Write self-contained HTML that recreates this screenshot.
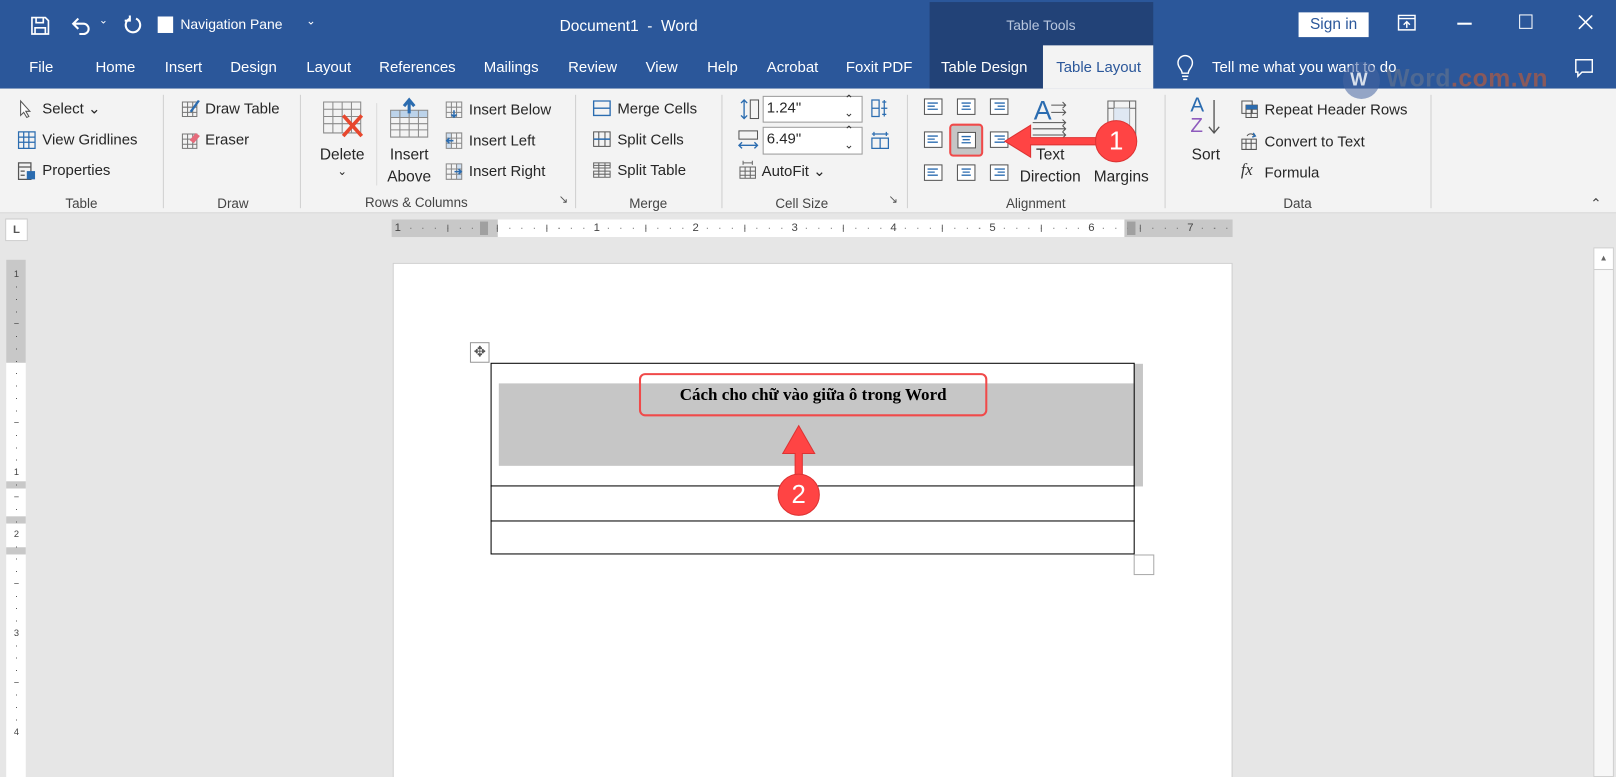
<!DOCTYPE html>
<html><head><meta charset="utf-8"><style>
*{margin:0;padding:0;box-sizing:border-box}
html,body{width:1616px;height:777px;overflow:hidden;background:#e6e6e6}
#w{position:absolute;left:0;top:0;width:1568px;height:754px;transform:scale(1.03061);transform-origin:0 0;font-family:"Liberation Sans",sans-serif;color:#262626;background:#e6e6e6;overflow:hidden}
.a{position:absolute;white-space:nowrap}
.tb{color:#fff;font-size:14.5px}
.r{font-size:14.5px;color:#262626}
.g{font-size:13px;color:#444;transform:translateX(-50%)}
.c{transform:translateX(-50%)}
.sep{position:absolute;top:92px;width:1px;height:110px;background:#d0d0d0}
svg{position:absolute;overflow:visible}
.rn{position:absolute;top:213px;height:17px;line-height:17px;font-size:11px;color:#444;transform:translateX(-50%);padding:0 1px}
</style></head><body><div id="w">
<!-- title bar -->
<div class="a" style="left:0;top:0;width:1568px;height:86px;background:#2b579a"></div>
<div class="a" style="top:2px;left:902px;width:217px;height:84px;background:#224277"></div>
<div class="a" style="left:1012px;top:44px;width:107px;height:42px;background:#f3f3f3"></div>
<div class="a" style="left:0;top:86px;width:1568px;height:121px;background:#f3f3f3;border-bottom:1px solid #d6d6d6"></div>
<!-- QAT -->
<svg style="left:30px;top:16px" width="18" height="18" viewBox="0 0 18 18"><path d="M1 1h13l3 3v13H1z M5 1v5h7V1 M4 17v-6h10v6" fill="none" stroke="#fff" stroke-width="1.6"/></svg>
<svg style="left:68px;top:15px" width="22" height="20" viewBox="0 0 22 20"><path d="M4 8h9a5 5 0 0 1 0 10H9 M8 3L3 8l5 5" fill="none" stroke="#fff" stroke-width="2"/></svg>
<div class="a tb" style="left:96px;top:15px;font-size:10px">&#8964;</div>
<svg style="left:120px;top:14px" width="18" height="20" viewBox="0 0 18 20"><path d="M12 4a7 7 0 1 1-6 0 M6 1v5H1" fill="none" stroke="#fff" stroke-width="2"/></svg>
<div class="a" style="left:153px;top:16px;width:15px;height:16px;background:#fff"></div>
<div class="a tb" style="left:175px;top:16px;font-size:13.5px">Navigation Pane</div>
<div class="a tb" style="left:297px;top:14px;font-size:11px">&#8964;</div>
<div class="a tb c" style="left:610px;top:17px;font-size:15px">Document1&nbsp; - &nbsp;Word</div>
<div class="a c" style="left:1010px;top:17px;font-size:13.5px;color:#b8c6de">Table Tools</div>
<div class="a" style="left:1260px;top:12px;width:68px;height:24px;background:#fff;color:#2b579a;font-size:15px;text-align:center;line-height:24px">Sign in</div>
<svg style="left:1356px;top:14px" width="18" height="16" viewBox="0 0 18 16"><path d="M1 1h16v14H1z M1 4h16 M9 13V7 M6 10l3-3 3 3" fill="none" stroke="#fff" stroke-width="1.4"/></svg>
<div class="a" style="left:1414px;top:22px;width:14px;height:1.5px;background:#fff"></div>
<div class="a" style="left:1474px;top:14px;width:13px;height:14px;border:1.5px solid #fff"></div>
<svg style="left:1531px;top:14px" width="15" height="15" viewBox="0 0 15 15"><path d="M1 1l13 13M14 1L1 14" stroke="#fff" stroke-width="1.5"/></svg>
<!-- tabs -->
<div class="a tb c" style="left:40px;top:58px">File</div>
<div class="a tb c" style="left:112px;top:58px">Home</div>
<div class="a tb c" style="left:178px;top:58px">Insert</div>
<div class="a tb c" style="left:246px;top:58px">Design</div>
<div class="a tb c" style="left:319px;top:58px">Layout</div>
<div class="a tb c" style="left:405px;top:58px">References</div>
<div class="a tb c" style="left:496px;top:58px">Mailings</div>
<div class="a tb c" style="left:575px;top:58px">Review</div>
<div class="a tb c" style="left:642px;top:58px">View</div>
<div class="a tb c" style="left:701px;top:58px">Help</div>
<div class="a tb c" style="left:769px;top:58px">Acrobat</div>
<div class="a tb c" style="left:853px;top:58px">Foxit PDF</div>
<div class="a tb c" style="left:955px;top:58px">Table Design</div>
<div class="a tb c" style="left:1066px;top:58px;color:#2b579a">Table Layout</div>
<svg style="left:1142px;top:54px" width="16" height="24" viewBox="0 0 16 24"><path d="M5 17c0-4-4-5-4-10a7 7 0 0 1 14 0c0 5-4 6-4 10z M5 20h6 M6 23h4" fill="none" stroke="#fff" stroke-width="1.4"/></svg>
<div class="a tb" style="left:1176px;top:58px">Tell me what you want to do</div>
<svg style="left:1528px;top:57px" width="18" height="18" viewBox="0 0 18 18"><path d="M1 1h16v12H7l-4 4v-4H1z" fill="none" stroke="#fff" stroke-width="1.4"/></svg>
<!-- watermark -->
<div class="a" style="left:1303px;top:60px;width:36px;height:36px;border-radius:50%;background:rgba(70,100,160,.55)"></div>
<div class="a" style="left:1310px;top:67px;font:bold 18px 'Liberation Sans',sans-serif;color:rgba(255,255,255,.8)">W</div>
<div class="a" style="left:1345px;top:63px;font:bold 24px 'Liberation Sans',sans-serif;color:rgba(110,120,140,.55);letter-spacing:0.5px">Word<span style="color:rgba(200,90,50,.6)">.com.vn</span></div>
<!-- separators -->
<div class="sep" style="left:158px"></div><div class="sep" style="left:291px"></div><div class="sep" style="left:558px"></div><div class="sep" style="left:700px"></div><div class="sep" style="left:880px"></div><div class="sep" style="left:1130px"></div><div class="sep" style="left:1388px"></div>
<!-- Table group -->
<svg style="left:18px;top:97px" width="14" height="18" viewBox="0 0 14 18"><path d="M2 1v14l3-3 3 5 2-1-3-5h4z" fill="#fff" stroke="#555"/></svg>
<div class="a r" style="left:41px;top:98px">Select &#8964;</div>
<svg style="left:17px;top:127px" width="18" height="18" viewBox="0 0 18 18"><path d="M1 1h16v16H1z M1 6h16 M1 11h16 M6 1v16 M11 1v16" fill="none" stroke="#2b6cb0" stroke-width="1.2"/></svg>
<div class="a r" style="left:41px;top:128px">View Gridlines</div>
<svg style="left:17px;top:157px" width="18" height="18" viewBox="0 0 18 18"><path d="M1 1h12v16H1z M1 5h12 M3 9h4 M3 13h4" fill="none" stroke="#555" stroke-width="1.2"/><rect x="9" y="9" width="8" height="8" fill="#2b6cb0"/></svg>
<div class="a r" style="left:41px;top:158px">Properties</div>
<div class="a g" style="left:79px;top:190px">Table</div>
<!-- Draw -->
<svg style="left:176px;top:96px" width="18" height="18" viewBox="0 0 18 18"><path d="M1 3h14v14H1z M1 8h14 M1 13h14 M6 3v14 M11 3v14" fill="none" stroke="#777"/><path d="M8 12l8-11 2 1-8 11z" fill="#2b6cb0"/></svg>
<div class="a r" style="left:199px;top:98px">Draw Table</div>
<svg style="left:176px;top:127px" width="18" height="18" viewBox="0 0 18 18"><path d="M1 3h14v14H1z M1 8h14 M1 13h14 M6 3v14 M11 3v14" fill="none" stroke="#777"/><path d="M8 9l6-7 4 3-6 7z" fill="#e56b7b"/></svg>
<div class="a r" style="left:199px;top:128px">Eraser</div>
<div class="a g" style="left:226px;top:190px">Draw</div>
<!-- Rows & Columns -->
<svg style="left:313px;top:98px" width="40" height="38" viewBox="0 0 40 38"><path d="M1 1h36v30H1z M1 8h36 M1 15h36 M1 22h36 M10 1v30 M19 1v30 M28 1v30" fill="none" stroke="#8a8a8a"/><path d="M20 14l18 20M38 14L20 34" stroke="#e8472d" stroke-width="3.5"/></svg>
<div class="a r c" style="left:332px;top:142px;font-size:15px">Delete</div>
<div class="a r c" style="left:332px;top:160px;font-size:11px">&#8964;</div>
<div class="a" style="left:365px;top:100px;width:1px;height:80px;background:#ddd"></div>
<svg style="left:378px;top:96px" width="40" height="38" viewBox="0 0 40 38"><rect x="1" y="11" width="36" height="7" fill="#bcd3ea"/><path d="M1 11h36v26H1z M1 18h36 M1 24h36 M1 30h36 M10 11v26 M19 11v26 M28 11v26" fill="none" stroke="#8a8a8a"/><path d="M19 14V2 M14 7l5-6 5 6" fill="none" stroke="#2b6cb0" stroke-width="3"/></svg>
<div class="a r c" style="left:397px;top:142px;font-size:15px">Insert</div>
<div class="a r c" style="left:397px;top:163px;font-size:15px">Above</div>
<svg style="left:432px;top:98px" width="17" height="17" viewBox="0 0 17 17"><path d="M1 1h15v15H1z M1 6h15 M1 11h15 M6 1v15 M11 1v15" fill="none" stroke="#8a8a8a"/><path d="M8.5 9v6M6 13l2.5 2.5 2.5-2.5" fill="none" stroke="#2b6cb0" stroke-width="1.5"/></svg>
<div class="a r" style="left:455px;top:99px">Insert Below</div>
<svg style="left:432px;top:128px" width="17" height="17" viewBox="0 0 17 17"><rect x="1" y="1" width="5" height="15" fill="#cfdff0"/><path d="M1 1h15v15H1z M1 6h15 M1 11h15 M6 1v15 M11 1v15" fill="none" stroke="#8a8a8a"/><path d="M2 8.5h6M4 6L1.5 8.5 4 11" fill="none" stroke="#2b6cb0" stroke-width="1.5"/></svg>
<div class="a r" style="left:455px;top:129px">Insert Left</div>
<svg style="left:432px;top:158px" width="17" height="17" viewBox="0 0 17 17"><rect x="11" y="1" width="5" height="15" fill="#cfdff0"/><path d="M1 1h15v15H1z M1 6h15 M1 11h15 M6 1v15 M11 1v15" fill="none" stroke="#8a8a8a"/><path d="M9 8.5h6M13 6l2.5 2.5L13 11" fill="none" stroke="#2b6cb0" stroke-width="1.5"/></svg>
<div class="a r" style="left:455px;top:159px">Insert Right</div>
<div class="a g" style="left:404px;top:189px">Rows &amp; Columns</div>
<div class="a" style="left:542px;top:187px;font-size:11px;color:#555">&#8600;</div>
<!-- Merge -->
<svg style="left:575px;top:97px" width="18" height="16" viewBox="0 0 18 16"><path d="M1 1h16v14H1z M1 8h16" fill="none" stroke="#2b6cb0" stroke-width="1.3"/></svg>
<div class="a r" style="left:599px;top:98px">Merge Cells</div>
<svg style="left:575px;top:127px" width="18" height="16" viewBox="0 0 18 16"><path d="M1 1h16v14H1z M1 8h16 M6 1v14 M12 1v14" fill="none" stroke="#555"/><path d="M1 8h16" stroke="#2b6cb0" stroke-width="1.5"/></svg>
<div class="a r" style="left:599px;top:128px">Split Cells</div>
<svg style="left:575px;top:157px" width="18" height="16" viewBox="0 0 18 16"><path d="M1 1h16v5H1z M1 9h16v6H1z M1 3.5h16 M1 12h16 M6 1v14 M12 1v14" fill="none" stroke="#666"/></svg>
<div class="a r" style="left:599px;top:158px">Split Table</div>
<div class="a g" style="left:629px;top:190px">Merge</div>
<!-- Cell size -->
<svg style="left:717px;top:95px" width="20" height="22" viewBox="0 0 20 22"><path d="M5 2v18 M2 5l3-3 3 3 M2 17l3 3 3-3" fill="none" stroke="#2b6cb0" stroke-width="1.3"/><rect x="11" y="2" width="8" height="18" fill="none" stroke="#555"/></svg>
<div class="a" style="left:740px;top:93px;width:97px;height:26px;background:#fff;border:1px solid #9a9a9a"></div>
<div class="a r" style="left:744px;top:97px;font-size:14.5px">1.24"</div>
<div class="a" style="left:819px;top:90px;font-size:11px;color:#333">&#8963;</div>
<div class="a" style="left:819px;top:103px;font-size:11px;color:#333">&#8964;</div>
<svg style="left:715px;top:126px" width="22" height="20" viewBox="0 0 22 20"><rect x="2" y="1" width="18" height="8" fill="none" stroke="#555"/><path d="M2 15h18 M5 12l-3 3 3 3 M17 12l3 3-3 3" fill="none" stroke="#2b6cb0" stroke-width="1.3"/></svg>
<div class="a" style="left:740px;top:123px;width:97px;height:27px;background:#fff;border:1px solid #9a9a9a"></div>
<div class="a r" style="left:744px;top:127px;font-size:14.5px">6.49"</div>
<div class="a" style="left:819px;top:120px;font-size:11px;color:#333">&#8963;</div>
<div class="a" style="left:819px;top:134px;font-size:11px;color:#333">&#8964;</div>
<svg style="left:845px;top:96px" width="18" height="18" viewBox="0 0 18 18"><path d="M1 1h7v16H1z M1 9h7 M13 1v16 M11 3h4 M11 15h4 M10 9h6" fill="none" stroke="#2b6cb0" stroke-width="1.2"/></svg>
<svg style="left:845px;top:127px" width="18" height="18" viewBox="0 0 18 18"><path d="M1 7h16v10H1z M9 7v10 M1 3h16 M3 1v4 M15 1v4" fill="none" stroke="#2b6cb0" stroke-width="1.2"/></svg>
<svg style="left:717px;top:156px" width="17" height="18" viewBox="0 0 17 18"><path d="M1 6h15v11H1z M1 10h15 M1 14h15 M6 6v11 M11 6v11 M4 2h9 M4 0v4 M13 0v4" fill="none" stroke="#666"/></svg>
<div class="a r" style="left:739px;top:159px">AutoFit &#8964;</div>
<div class="a g" style="left:778px;top:190px">Cell Size</div>
<div class="a" style="left:862px;top:187px;font-size:11px;color:#555">&#8600;</div>
<!-- Alignment grid -->
<svg style="left:896px;top:95px" width="90" height="82" viewBox="0 0 90 82">
<g fill="#fff" stroke="#555"><rect x="1" y="1" width="17" height="15"/><rect x="33" y="1" width="17" height="15"/><rect x="65" y="1" width="17" height="15"/><rect x="1" y="33" width="17" height="15"/><rect x="65" y="33" width="17" height="15"/><rect x="1" y="65" width="17" height="15"/><rect x="33" y="65" width="17" height="15"/><rect x="65" y="65" width="17" height="15"/></g>
<g stroke="#2b6cb0" stroke-width="1.3"><path d="M4 5h10M4 8h7M4 11h10"/><path d="M37 5h9M38 8h7M37 11h9"/><path d="M69 5h10M72 8h7M69 11h10"/><path d="M4 37h10M4 40h7M4 43h10"/><path d="M69 37h10M72 40h7M69 43h10"/><path d="M4 69h10M4 72h7M4 75h10"/><path d="M37 69h9M38 72h7M37 75h9"/><path d="M69 69h10M72 72h7M69 75h10"/></g></svg>
<div class="a" style="left:921px;top:120px;width:33px;height:32px;background:#c5c5c5;border:2.5px solid #f04a4a;border-radius:4px"></div>
<svg style="left:929px;top:128px" width="18" height="16" viewBox="0 0 18 16"><rect x="0.5" y="0.5" width="17" height="15" fill="#fff" stroke="#555"/><path d="M4 4.5h9M5 7.5h7M4 10.5h9" stroke="#2b6cb0" stroke-width="1.3"/></svg>
<div class="a" style="left:1003px;top:92px;font-size:26px;color:#2b6cb0">A</div>
<svg style="left:1000px;top:98px" width="40" height="36" viewBox="0 0 40 36"><path d="M20 4h14M20 11h14M2 21h32M2 27h32M2 33h32 M31 1l3 3-3 3 M31 8l3 3-3 3 M31 18l3 3-3 3 M31 24l3 3-3 3 M31 30l3 3-3 3" fill="none" stroke="#555"/></svg>
<div class="a r c" style="left:1019px;top:142px;font-size:15px">Text</div>
<div class="a r c" style="left:1019px;top:163px;font-size:15px">Direction</div>
<svg style="left:1074px;top:97px" width="30" height="40" viewBox="0 0 30 40"><path d="M1 1h27v38H1z M7 1v38 M22 1v38 M1 8h27" fill="none" stroke="#666"/><rect x="7" y="8" width="15" height="30" fill="#dfe8f3"/></svg>
<div class="a r c" style="left:1088px;top:163px;font-size:15px">Margins</div>
<div class="a g" style="left:1005px;top:190px">Alignment</div>
<!-- Data -->
<div class="a" style="left:1155px;top:92px;font-size:20px;color:#2b6cb0;line-height:20px">A</div>
<div class="a" style="left:1155px;top:112px;font-size:20px;color:#8e5bbd;line-height:20px">Z</div>
<svg style="left:1172px;top:96px" width="12" height="36" viewBox="0 0 12 36"><path d="M6 1v32M1 27l5 6 5-6" fill="none" stroke="#555" stroke-width="1.3"/></svg>
<div class="a r c" style="left:1170px;top:142px;font-size:15px">Sort</div>
<svg style="left:1204px;top:97px" width="17" height="18" viewBox="0 0 17 18"><path d="M1 1h10v12H1z M5 5h11v12H5z M5 9h11 M5 13h11 M10 5v12" fill="none" stroke="#555"/><rect x="5" y="5" width="11" height="4" fill="#2b6cb0"/></svg>
<div class="a r" style="left:1227px;top:99px">Repeat Header Rows</div>
<svg style="left:1204px;top:128px" width="17" height="18" viewBox="0 0 17 18"><path d="M1 7h14v10H1z M1 11h14 M5 7v10 M10 7v10 M6 4a4 4 0 0 1 7 0" fill="none" stroke="#555"/><path d="M12 1l2 3-3 1" fill="none" stroke="#2b6cb0" stroke-width="1.4"/></svg>
<div class="a r" style="left:1227px;top:130px">Convert to Text</div>
<div class="a" style="left:1204px;top:157px;font:italic 16px 'Liberation Serif',serif;color:#333">fx</div>
<div class="a r" style="left:1227px;top:160px">Formula</div>
<div class="a g" style="left:1259px;top:190px">Data</div>
<div class="a" style="left:1543px;top:190px;font-size:13px;color:#444">&#8963;</div>
<!-- rulers -->
<div class="a" style="left:5px;top:212px;width:22px;height:22px;background:#fff;border:1px solid #ccc;font-size:11px;font-weight:bold;color:#555;text-align:center;line-height:20px">L</div>
<div class="a" style="left:380px;top:213px;width:816px;height:17px;background:#c8c8c8"></div>
<div class="a" style="left:483px;top:213px;width:608px;height:17px;background:#fff"></div>
<div class="a" style="left:380px;top:221px;width:816px;height:1px;background-image:repeating-linear-gradient(90px,transparent 0,transparent 11px,#666 11px,#666 12px);background:repeating-linear-gradient(90deg,transparent 0 11px,#666 11px 12px);background-position:7px 0"></div>
<div class="a" style="left:380px;top:218px;width:816px;height:7px;background:repeating-linear-gradient(90deg,transparent 0 47px,#666 47px 48px);background-position:7px 0"></div>
<div class="rn" style="left:386px;background:#c8c8c8">1</div>
<div class="a" style="left:466px;top:215px;width:8px;height:13px;background:repeating-linear-gradient(90deg,#777 0 1px,#c8c8c8 1px 2px)"></div>
<div class="a" style="left:1094px;top:215px;width:8px;height:13px;background:repeating-linear-gradient(90deg,#777 0 1px,#c8c8c8 1px 2px)"></div>
<div class="rn" style="left:579px;background:#fff">1</div>
<div class="rn" style="left:675px;background:#fff">2</div>
<div class="rn" style="left:771px;background:#fff">3</div>
<div class="rn" style="left:867px;background:#fff">4</div>
<div class="rn" style="left:963px;background:#fff">5</div>
<div class="rn" style="left:1059px;background:#fff">6</div>
<div class="rn" style="left:1155px;background:#c8c8c8">7</div>
<div class="a" style="left:6px;top:252px;width:19px;height:502px;background:#fff"></div>
<div class="a" style="left:6px;top:252px;width:19px;height:100px;background:#c8c8c8"></div>
<div class="a" style="left:6px;top:467px;width:19px;height:7px;background:#c8c8c8"></div>
<div class="a" style="left:6px;top:501px;width:19px;height:7px;background:#c8c8c8"></div>
<div class="a" style="left:6px;top:531px;width:19px;height:7px;background:#c8c8c8"></div>
<div class="a" style="left:12px;top:260px;width:8px;font-size:9px;color:#444;line-height:12px;text-align:center;white-space:normal">1 · · · − · · · · · · · − · · · 1 · − · · 2 · · · − · · · 3 · · · − · · · 4</div>
<!-- scrollbar -->
<div class="a" style="left:1546px;top:240px;width:20px;height:514px;background:#f7f7f7;border:1px solid #cfcfcf"></div>
<div class="a" style="left:1546px;top:240px;width:20px;height:22px;background:#fff;border:1px solid #cfcfcf;font-size:8px;color:#666;text-align:center;line-height:20px">&#9650;</div>
<!-- page -->
<div class="a" style="left:381px;top:255px;width:815px;height:510px;background:#fff;border:1px solid #cdcdcd"></div>
<div class="a" style="left:456px;top:332px;width:19px;height:20px;border:1.5px solid #999;background:#fff;font-size:14px;color:#555;text-align:center;line-height:16px">&#10021;</div>
<div class="a" style="left:484px;top:372px;width:616px;height:80px;background:#c6c6c6"></div>
<div class="a" style="left:1100px;top:353px;width:9px;height:119px;background:#c6c6c6"></div>
<div class="a" style="left:476px;top:352px;width:625px;height:186px;border:1.3px solid #000"></div>
<div class="a" style="left:476px;top:471px;width:625px;height:1.3px;background:#000"></div>
<div class="a" style="left:476px;top:505px;width:625px;height:1.3px;background:#000"></div>
<div class="a" style="left:1100px;top:538px;width:20px;height:20px;border:1.5px solid #aaa;background:#fff"></div>
<div class="a" style="left:620px;top:362px;width:338px;height:42px;border:2.5px solid #f04a4a;border-radius:6px"></div>
<div class="a c" style="left:789px;top:373px;font:bold 16.5px 'Liberation Serif',serif;color:#000">Cách cho chữ vào giữa ô trong Word</div>
<!-- arrows -->
<svg style="left:0;top:0" width="1568" height="754" viewBox="0 0 1568 754">
<path d="M1065 133.5H1000v-12L975 137l25 15.5v-12H1065z" fill="#f44" stroke="#d33" stroke-width="1"/>
<circle cx="1083" cy="137" r="20" fill="#f44" stroke="#d33"/>
<path d="M771.5 475V440h-12L775 413l15.5 27h-12V475z" fill="#f44" stroke="#d33"/>
<circle cx="775" cy="480" r="20" fill="#f44" stroke="#d33"/>
</svg>
<div class="a c" style="left:1083px;top:123px;font-size:25px;color:#fff">1</div>
<div class="a c" style="left:775px;top:466px;font-size:25px;color:#fff">2</div>
</div></body></html>
